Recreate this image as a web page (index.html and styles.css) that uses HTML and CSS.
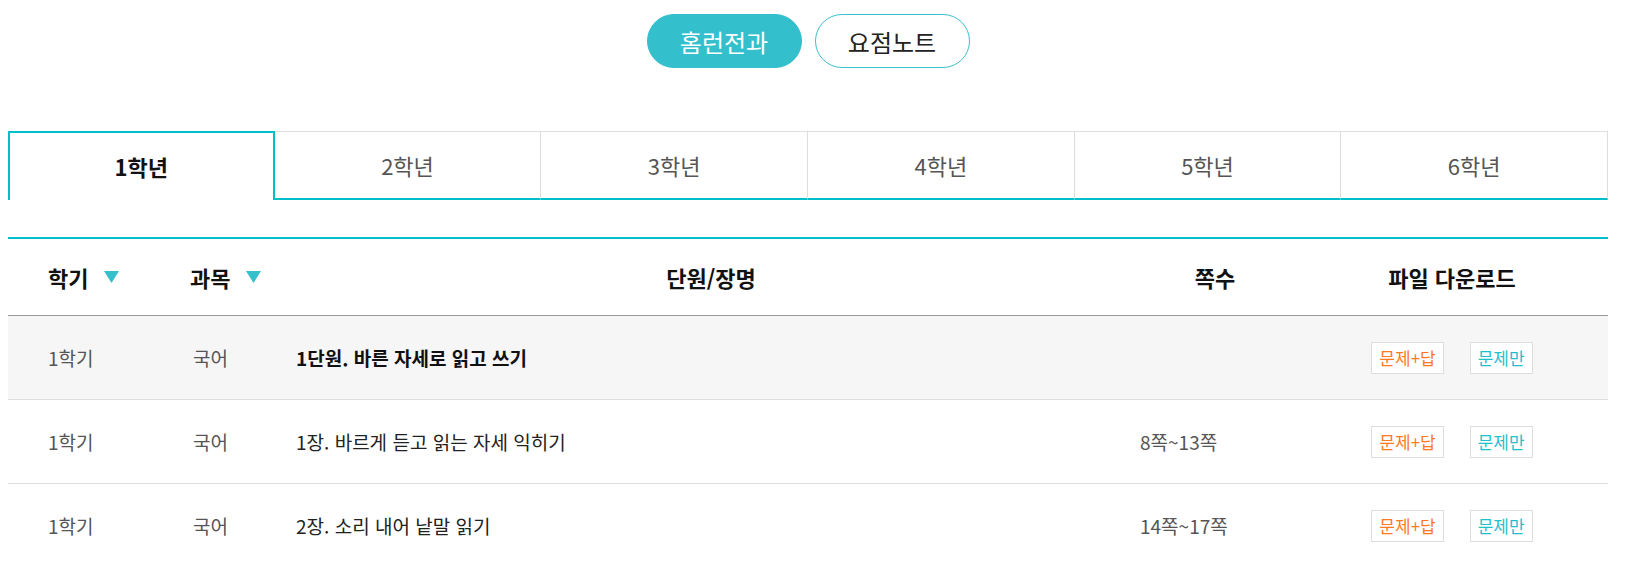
FILE: index.html
```html
<!DOCTYPE html>
<html lang="ko">
<head>
<meta charset="utf-8">
<title>자료실</title>
<link rel="stylesheet" href="styles.css">
</head>
<body>
<div class="wrap">
  <div class="seg">
    <a class="pill pill-on">홈런전과</a>
    <a class="pill">요점노트</a>
  </div>

  <div class="tabs">
    <div class="tab tab-on">1학년</div>
    <div class="tab">2학년</div>
    <div class="tab">3학년</div>
    <div class="tab">4학년</div>
    <div class="tab">5학년</div>
    <div class="tab">6학년</div>
  </div>

  <div class="table">
    <div class="row head">
      <div class="c c1">학기<svg class="tri" width="15" height="12" viewBox="0 0 15 12"><polygon points="0,0 15,0 7.5,12" fill="#35c0cb"/></svg></div>
      <div class="c c2 hc2">과목<svg class="tri" width="15" height="12" viewBox="0 0 15 12"><polygon points="0,0 15,0 7.5,12" fill="#35c0cb"/></svg></div>
      <div class="c c3 hc3">단원/장명</div>
      <div class="c c4 hc4">쪽수</div>
      <div class="c c5">파일 다운로드</div>
    </div>

    <div class="row unit">
      <div class="c c1">1학기</div>
      <div class="c c2">국어</div>
      <div class="c c3 title-b">1단원. 바른 자세로 읽고 쓰기</div>
      <div class="c c4"></div>
      <div class="c c5"><a class="dl dl-ans">문제+답</a><a class="dl dl-q">문제만</a></div>
    </div>

    <div class="row">
      <div class="c c1">1학기</div>
      <div class="c c2">국어</div>
      <div class="c c3 title">1장. 바르게 듣고 읽는 자세 익히기</div>
      <div class="c c4">8쪽~13쪽</div>
      <div class="c c5"><a class="dl dl-ans">문제+답</a><a class="dl dl-q">문제만</a></div>
    </div>

    <div class="row">
      <div class="c c1">1학기</div>
      <div class="c c2">국어</div>
      <div class="c c3 title">2장. 소리 내어 낱말 읽기</div>
      <div class="c c4">14쪽~17쪽</div>
      <div class="c c5"><a class="dl dl-ans">문제+답</a><a class="dl dl-q">문제만</a></div>
    </div>
  </div>
</div>
</body>
</html>
```

FILE: styles.css
```css
body {
  margin: 8px;
  background: #fff;
  font-family: "Noto Sans CJK KR", "Noto Sans", sans-serif;
  color: #222;
}

.wrap {
  width: 1600px;
}

.seg {
  display: flex;
  justify-content: center;
  gap: 13px;
  padding-top: 6px;
}

.pill {
  box-sizing: border-box;
  width: 155px;
  height: 54px;
  border-radius: 27px;
  border: 1px solid #3cbfcd;
  background: #fff;
  color: #222;
  font-size: 24px;
  display: flex;
  align-items: center;
  justify-content: center;
  text-decoration: none;
}

.pill-on {
  background: #34bfcc;
  border-color: #34bfcc;
  color: #fff;
}

.tabs {
  margin-top: 63px;
  display: grid;
  grid-template-columns: repeat(6, 1fr);
}

.tab {
  box-sizing: border-box;
  height: 69px;
  border-top: 1px solid #ddd;
  border-right: 1px solid #ddd;
  border-bottom: 2px solid #00bfc9;
  display: flex;
  align-items: center;
  justify-content: center;
  font-size: 22px;
  color: #555;
}

.tab-on {
  border: 2px solid #00bfc9;
  border-bottom: none;
  padding-bottom: 2px;
  color: #111;
  font-weight: 700;
}

.table {
  margin-top: 37px;
  border-top: 2px solid #00bfc9;
}

.row {
  display: grid;
  grid-template-columns: 142px 106px 844px 196px 312px;
  box-sizing: border-box;
  height: 84px;
  border-bottom: 1px solid #dddddd;
  font-size: 19px;
  color: #555;
}

.row.head {
  height: 77px;
  border-bottom: 1px solid #999;
  font-size: 22px;
  font-weight: 700;
  color: #111;
}

.row.unit {
  background: #f6f6f6;
}

.c {
  display: flex;
  align-items: center;
  white-space: nowrap;
}

.c1 { padding-left: 40px; }
.c2 { padding-left: 43px; }
.c3 { padding-left: 40px; }
.c4 { padding-left: 40px; }
.c5 { justify-content: center; gap: 26px; }

.hc2 { padding-left: 40px; }
.hc3 { padding-left: 66px; justify-content: center; }
.hc4 { padding-left: 34px; justify-content: center; }

.tri {
  margin-left: 16px;
  display: block;
  flex-shrink: 0;
}

.title { color: #222; }
.title-b { color: #111; font-weight: 700; }

.dl {
  box-sizing: border-box;
  height: 32px;
  padding: 0 7px;
  border: 1px solid #dddddd;
  background: #fff;
  font-size: 17px;
  display: flex;
  align-items: center;
  text-decoration: none;
}

.dl-ans { color: #ff7a1c; }
.dl-q { color: #1fc0cc; }
```
